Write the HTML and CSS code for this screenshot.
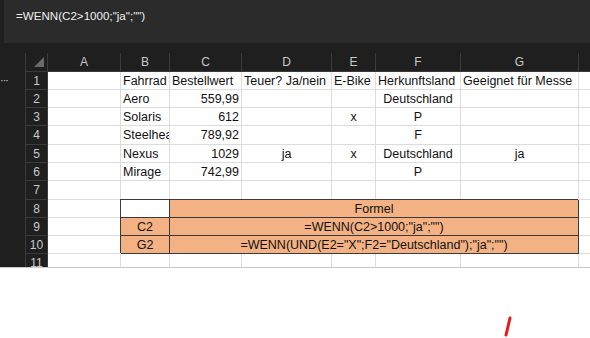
FILE: index.html
```html
<!DOCTYPE html>
<html lang="de">
<head>
    <meta charset="UTF-8">
    <title>Tabelle - WENN</title>
    <link rel="stylesheet" href="styles.css">
</head>
<body>

<div class="app">
    <div class="formula-bar">
        <span class="formula">=WENN(C2&gt;1000;"ja";"")</span>
    </div>

    <div class="sheet-area">
        <div class="gutter"><span class="more">&middot;&middot;&middot;</span></div>

        <div class="sheet">
            <!-- column headers -->
            <div class="corner"><span class="corner-tri"></span></div>
            <div class="ch">A</div>
            <div class="ch">B</div>
            <div class="ch">C</div>
            <div class="ch">D</div>
            <div class="ch">E</div>
            <div class="ch">F</div>
            <div class="ch">G</div>
            <div class="ch"></div>

            <!-- row 1 -->
            <div class="rh">1</div>
            <div class="c"></div>
            <div class="c">Fahrrad</div>
            <div class="c">Bestellwert</div>
            <div class="c">Teuer? Ja/nein</div>
            <div class="c">E-Bike</div>
            <div class="c">Herkunftsland</div>
            <div class="c">Geeignet für Messe</div>
            <div class="c"></div>

            <!-- row 2 -->
            <div class="rh">2</div>
            <div class="c"></div>
            <div class="c">Aero</div>
            <div class="c num">559,99</div>
            <div class="c"></div>
            <div class="c"></div>
            <div class="c mid">Deutschland</div>
            <div class="c"></div>
            <div class="c"></div>

            <!-- row 3 -->
            <div class="rh">3</div>
            <div class="c"></div>
            <div class="c">Solaris</div>
            <div class="c num">612</div>
            <div class="c"></div>
            <div class="c mid">x</div>
            <div class="c mid">P</div>
            <div class="c"></div>
            <div class="c"></div>

            <!-- row 4 -->
            <div class="rh">4</div>
            <div class="c"></div>
            <div class="c">Steelhead</div>
            <div class="c num">789,92</div>
            <div class="c"></div>
            <div class="c"></div>
            <div class="c mid">F</div>
            <div class="c"></div>
            <div class="c"></div>

            <!-- row 5 -->
            <div class="rh">5</div>
            <div class="c"></div>
            <div class="c">Nexus</div>
            <div class="c num">1029</div>
            <div class="c mid">ja</div>
            <div class="c mid">x</div>
            <div class="c mid">Deutschland</div>
            <div class="c mid">ja</div>
            <div class="c"></div>

            <!-- row 6 -->
            <div class="rh">6</div>
            <div class="c"></div>
            <div class="c">Mirage</div>
            <div class="c num">742,99</div>
            <div class="c"></div>
            <div class="c"></div>
            <div class="c mid">P</div>
            <div class="c"></div>
            <div class="c"></div>

            <!-- row 7 -->
            <div class="rh">7</div>
            <div class="c"></div>
            <div class="c"></div>
            <div class="c"></div>
            <div class="c"></div>
            <div class="c"></div>
            <div class="c"></div>
            <div class="c"></div>
            <div class="c"></div>

            <!-- row 8: formula table -->
            <div class="rh">8</div>
            <div class="c"></div>
            <div class="c boxed"></div>
            <div class="c boxed orange mid wide">Formel</div>
            <div class="c"></div>

            <!-- row 9 -->
            <div class="rh">9</div>
            <div class="c"></div>
            <div class="c boxed orange mid">C2</div>
            <div class="c boxed orange mid wide">=WENN(C2&gt;1000;"ja";"")</div>
            <div class="c"></div>

            <!-- row 10 -->
            <div class="rh">10</div>
            <div class="c"></div>
            <div class="c boxed orange mid">G2</div>
            <div class="c boxed orange mid wide">=WENN(UND(E2="X";F2="Deutschland");"ja";"")</div>
            <div class="c"></div>

            <!-- row 11 -->
            <div class="rh">11</div>
            <div class="c"></div>
            <div class="c"></div>
            <div class="c"></div>
            <div class="c"></div>
            <div class="c"></div>
            <div class="c"></div>
            <div class="c"></div>
            <div class="c"></div>
        </div>
    </div>
</div>

<div class="below">
    <svg class="mark" width="10" height="22" viewBox="0 0 10 22">
        <line x1="7" y1="2" x2="3" y2="19" stroke="#e8191b" stroke-width="3" stroke-linecap="round"/>
    </svg>
</div>

</body>
</html>
```

FILE: styles.css
```css
body {
    margin: 0;
    background-color: #ffffff;
    font-family: "Liberation Sans", Arial, sans-serif;
}

.app {
    height: 268px;
    background-color: #1f1f1f;
    overflow: hidden;
    border-bottom: 1px solid #c8c8c8;
    box-sizing: border-box;
}

.formula-bar {
    height: 43px;
    margin-left: 4px;
    padding: 6px 0 0 12px;
    box-sizing: border-box;
    background-color: #2b2b2b;
}

.formula {
    color: #f0f0f0;
    font-size: 11.6px;
}

.sheet-area {
    display: flex;
    margin-top: 10px;
    height: 215px;
    overflow: hidden;
}

.gutter {
    width: 25px;
    flex-shrink: 0;
    padding-top: 20px;
    box-sizing: border-box;
}

.more {
    display: block;
    color: #cfcfcf;
    font-size: 11px;
    letter-spacing: -1px;
    line-height: 14px;
}

.sheet {
    display: grid;
    grid-template-columns: 23px 73px 49px 72px 90px 44px 85px 118px 20px;
    grid-template-rows: 18.5px repeat(11, 18.3px);
    flex-shrink: 0;
}

.corner,
.ch,
.rh {
    background-color: #1f1f1f;
    color: #c9c9c9;
    font-size: 12px;
    text-align: center;
    line-height: 18px;
    border-right: 1px solid #3a3a3a;
    border-bottom: 1px solid #3a3a3a;
    box-sizing: border-box;
}

.corner,
.rh {
    border-left: 1px solid #3a3a3a;
}

.corner {
    position: relative;
}

/* little select-all triangle */
.corner-tri {
    position: absolute;
    right: 3px;
    bottom: 4px;
    width: 0;
    height: 0;
    border-left: 10px solid transparent;
    border-bottom: 10px solid #6a6a6a;
}

.c {
    background-color: #ffffff;
    color: #111111;
    font-size: 12.5px;
    line-height: 18px;
    padding: 0 2px;
    white-space: nowrap;
    overflow: hidden;
    border-right: 1px solid #dcdcdc;
    border-bottom: 1px solid #dcdcdc;
    box-sizing: border-box;
}

.num {
    text-align: right;
}

.mid {
    text-align: center;
}

.wide {
    grid-column: span 5;
}

.boxed {
    border-right-color: #3a3a3a;
    border-bottom-color: #3a3a3a;
    box-shadow: -1px -1px 0 #3a3a3a;
}

.orange {
    background-color: #f4b183;
}

.below {
    height: 70px;
    padding: 48px 0 0 503px;
    box-sizing: border-box;
}

.mark {
    display: block;
}
```
